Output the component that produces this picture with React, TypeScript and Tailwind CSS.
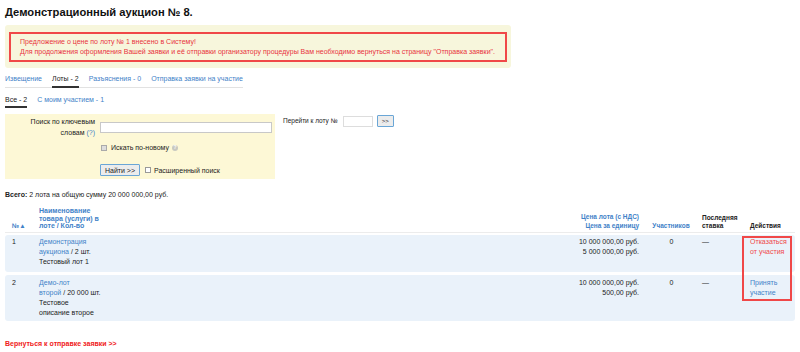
import React from "react";

const link = "text-[#3f82c8]";

function Row({
  num,
  name,
  qty,
  desc,
  price,
  unit,
  action,
  actionRed,
  h,
}: {
  num: string;
  name: string[];
  qty: string;
  desc: string[];
  price: string;
  unit: string;
  action: string[];
  actionRed: boolean;
  h: string;
}) {
  return (
    <div className={`grid grid-cols-[34px_200px_406px_52px_45px_53px] rounded-[3px] bg-[#eaf2fa] text-[7px] leading-[10px] text-[#222] ${h}`}>
      <div className="pl-[7px]">{num}</div>
      <div>
        <div className={link}>{name[0]}</div>
        <div>
          <span className={link}>{name[1]}</span> / {qty}
        </div>
        {desc.map((d) => (
          <div key={d}>{d}</div>
        ))}
      </div>
      <div className="pr-[6px] text-right">
        <div>{price}</div>
        <div>{unit}</div>
      </div>
      <div className="pl-[1px] text-center">0</div>
      <div className="pl-[5px]">—</div>
      <div className={`pl-[8px] ${actionRed ? "text-[#f04848]" : link}`}>
        {action.map((a) => (
          <div key={a}>{a}</div>
        ))}
      </div>
    </div>
  );
}

export default function App() {
  return (
    <div
      className="relative h-[352px] w-[800px] overflow-hidden bg-white px-[5px] text-[#222]"
      style={{ fontFamily: '"Liberation Sans", Arial, sans-serif' }}
    >
      <h1 className="pt-[5px] text-[11.2px] font-bold leading-[14px] text-[#111]">
        Демонстрационный аукцион № 8.
      </h1>

      <div className="mt-[6px] w-[506px] rounded-[3px] bg-[#f7f6dc] px-[4px] pb-[6px] pt-[7px]">
        <div className="border-2 border-[#f04848] px-[9px] pb-[3px] pt-[3px] text-[7px] leading-[10px] text-[#e8343c]">
          <div>Предложение о цене по лоту № 1 внесено в Систему!</div>
          <div className="whitespace-nowrap">
            Для продолжения оформления Вашей заявки и её отправки организатору процедуры Вам необходимо вернуться на страницу "Отправка заявки".
          </div>
        </div>
      </div>

      <div className="mt-[6px] flex w-[238px] gap-[10px] border-b border-[#e2e2e2] text-[7px] leading-[10px]">
        <span className={`${link} pb-[3px]`}>Извещение</span>
        <span className="-mb-px border-b-2 border-[#333] pb-[2px] text-[#222]">Лоты - 2</span>
        <span className={`${link} pb-[3px]`}>Разъяснения - 0</span>
        <span className={`${link} pb-[3px]`}>Отправка заявки на участие</span>
      </div>

      <div className="mt-[7px] flex w-[100px] gap-[10px] text-[7px] leading-[10px]">
        <span className="border-b-2 border-[#333] pb-[1px] text-[#222]">Все - 2</span>
        <span className={link}>С моим участием - 1</span>
      </div>

      <div className="mt-[6px] flex">
        <div className="h-[65px] w-[270px] bg-[#fdf8d6] pt-[2px] text-[7px] leading-[11px]">
          <div className="flex">
            <div className="w-[92px] pr-[2px] text-right">
              Поиск по ключевым
              <br />
              словам <span className={link}>(?)</span>
            </div>
            <div className="pl-[3px] pt-[6px]">
              <div className="h-[11px] w-[172px] border border-[#c8c8c8] bg-white"></div>
            </div>
          </div>
          <div className="mt-[4px] flex items-center pl-[96px]">
            <span className="h-[6px] w-[6px] border border-[#aaa] bg-[#ddd]"></span>
            <span className="ml-[4px]">Искать по-новому</span>
            <span className="ml-[3px] flex h-[6px] w-[6px] items-center justify-center rounded-full bg-[#c8c8c0] text-[5px] font-bold leading-none text-white">?</span>
          </div>
          <div className="mt-[11px] flex items-center pl-[95px]">
            <span className="flex h-[12px] w-[40px] items-center justify-center rounded-[1px] border border-[#6aa6d6] bg-[#ececec] text-[7px] leading-none text-[#222]">
              Найти &gt;&gt;
            </span>
            <span className="ml-[5px] h-[6px] w-[6px] border border-[#999] bg-white"></span>
            <span className="ml-[3px]">Расширенный поиск</span>
          </div>
        </div>
        <div className="ml-[8px] flex items-start text-[6.5px] leading-[10px]">
          <span className="pt-[2px]">Перейти к лоту №</span>
          <span className="ml-[5px] mt-[2px] h-[11px] w-[30px] border border-[#ddd] bg-white"></span>
          <span className="ml-[4px] mt-[1px] flex h-[12px] w-[17px] items-center justify-center rounded-[1px] border border-[#6aa6d6] bg-[#ececec] text-[6px] leading-none">
            &gt;&gt;
          </span>
        </div>
      </div>

      <div className="mt-[11px] text-[7px] leading-[10px]">
        <b>Всего:</b> 2 лота на общую сумму 20 000 000,00 руб.
      </div>

      <div className="mt-[7px] grid grid-cols-[34px_200px_406px_52px_45px_53px] items-end border-b border-[#ececec] pb-[2px] text-[6.5px] font-bold leading-[7.5px]">
        <div className={`pl-[7px] ${link}`}>№▲</div>
        <div className={`text-[7px] ${link}`}>
          Наименование
          <br />
          товара (услуги) в
          <br />
          лоте / Кол-во
        </div>
        <div className={`pr-[6px] text-right ${link}`}>
          <div className="mb-[2px]">Цена лота (с НДС)</div>
          <div>Цена за единицу</div>
        </div>
        <div className={`text-center ${link}`}>Участников</div>
        <div className="pl-[5px] leading-[8px] text-[#222]">
          Последняя
          <br />
          ставка
        </div>
        <div className="pl-[8px] text-[#222]">Действия</div>
      </div>

      <div className="relative mt-[2px] flex flex-col gap-[3px]">
        <Row
          num="1"
          name={["Демонстрация", "аукциона"]}
          qty="2 шт."
          desc={["Тестовый лот 1"]}
          price="10 000 000,00 руб."
          unit="5 000 000,00 руб."
          action={["Отказаться", "от участия"]}
          actionRed
          h="h-[37px] pt-[2px]"
        />
        <Row
          num="2"
          name={["Демо-лот", "второй"]}
          qty="20 000 шт."
          desc={["Тестовое", "описание второе"]}
          price="10 000 000,00 руб."
          unit="500,00 руб."
          action={["Принять", "участие"]}
          actionRed={false}
          h="h-[46px] pt-[3px]"
        />
        <div className="pointer-events-none absolute left-[737px] top-[1px] h-[65px] w-[50px] border-2 border-[#f04848]"></div>
      </div>

      <div className="mt-[18px] text-[7px] font-bold leading-[10px] text-[#f02020]">
        Вернуться к отправке заявки &gt;&gt;
      </div>
    </div>
  );
}
